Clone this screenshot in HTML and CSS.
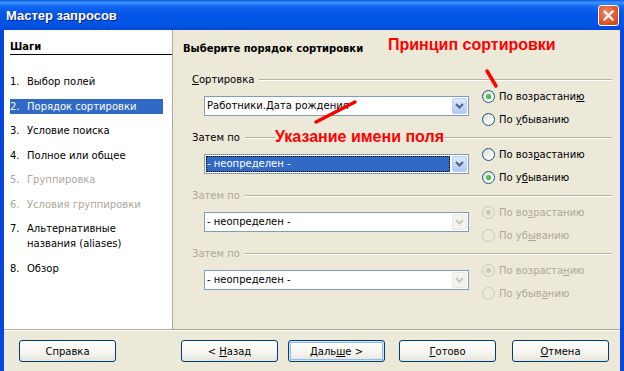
FILE: index.html
```html
<!DOCTYPE html>
<html>
<head>
  <title>Мастер запросов</title>
  <link rel="stylesheet" href="styles.css">
</head>
<body>
  <div class="window">
    <div class="titlebar">
      <span class="title">Мастер запросов</span>
      <span class="close">
        <svg width="11" height="11" viewBox="0 0 11 11"><path d="M1.5 1.5 L9.5 9.5 M9.5 1.5 L1.5 9.5" stroke="#fff" stroke-width="2.2" stroke-linecap="square"/></svg>
      </span>
    </div>

    <div class="frame">
      <div class="main">
        <div class="steps">
          <div class="steps-head">Шаги</div>
          <ol class="step-list">
            <li class="step"><span class="num">1.</span><span>Выбор полей</span></li>
            <li class="step active"><span class="num">2.</span><span>Порядок сортировки</span></li>
            <li class="step"><span class="num">3.</span><span>Условие поиска</span></li>
            <li class="step"><span class="num">4.</span><span>Полное или общее</span></li>
            <li class="step off"><span class="num">5.</span><span>Группировка</span></li>
            <li class="step off"><span class="num">6.</span><span>Условия группировки</span></li>
            <li class="step"><span class="num">7.</span><span>Альтернативные<br>названия (aliases)</span></li>
            <li class="step"><span class="num">8.</span><span>Обзор</span></li>
          </ol>
        </div>

        <div class="page">
          <div class="page-head">Выберите порядок сортировки</div>

          <div class="group">
            <div class="group-head"><span><u>С</u>ортировка</span><i class="rule"></i></div>
            <div class="group-row">
              <div class="combo">
                <span class="combo-text">Работники.Дата рождения</span>
                <span class="combo-btn"><svg width="9" height="6" viewBox="0 0 9 6"><path d="M1 1 L4.5 4.5 L8 1" fill="none" stroke="#4d6185" stroke-width="2"/></svg></span>
              </div>
              <div class="radios">
                <div class="radio"><span class="dot checked"></span><span>По возрастани<u>ю</u></span></div>
                <div class="radio"><span class="dot"></span><span>По <u>у</u>быванию</span></div>
              </div>
            </div>
          </div>

          <div class="group">
            <div class="group-head"><span>Затем по</span><i class="rule"></i></div>
            <div class="group-row">
              <div class="combo">
                <span class="combo-text"><span class="selected">- неопределен -</span></span>
                <span class="combo-btn"><svg width="9" height="6" viewBox="0 0 9 6"><path d="M1 1 L4.5 4.5 L8 1" fill="none" stroke="#4d6185" stroke-width="2"/></svg></span>
              </div>
              <div class="radios">
                <div class="radio"><span class="dot"></span><span>По воз<u>р</u>астанию</span></div>
                <div class="radio"><span class="dot checked"></span><span>По у<u>б</u>ыванию</span></div>
              </div>
            </div>
          </div>

          <div class="group disabled">
            <div class="group-head"><span>Затем по</span><i class="rule"></i></div>
            <div class="group-row">
              <div class="combo">
                <span class="combo-text">- неопределен -</span>
                <span class="combo-btn"><svg width="9" height="6" viewBox="0 0 9 6"><path d="M1 1 L4.5 4.5 L8 1" fill="none" stroke="#c9c7ba" stroke-width="2"/></svg></span>
              </div>
              <div class="radios">
                <div class="radio"><span class="dot checked"></span><span>По во<u>з</u>растанию</span></div>
                <div class="radio"><span class="dot"></span><span>По уб<u>ы</u>ванию</span></div>
              </div>
            </div>
          </div>

          <div class="group disabled">
            <div class="group-head"><span>Затем по</span><i class="rule"></i></div>
            <div class="group-row">
              <div class="combo">
                <span class="combo-text">- неопределен -</span>
                <span class="combo-btn"><svg width="9" height="6" viewBox="0 0 9 6"><path d="M1 1 L4.5 4.5 L8 1" fill="none" stroke="#c9c7ba" stroke-width="2"/></svg></span>
              </div>
              <div class="radios">
                <div class="radio"><span class="dot checked"></span><span>По возраста<u>н</u>ию</span></div>
                <div class="radio"><span class="dot"></span><span>По убыв<u>а</u>нию</span></div>
              </div>
            </div>
          </div>
        </div>
      </div>

      <div class="buttons">
        <button class="btn">Справка</button>
        <button class="btn back">&lt; <u>Н</u>азад</button>
        <button class="btn next default">Даль<u>ш</u>е &gt;</button>
        <button class="btn done"><u>Г</u>отово</button>
        <button class="btn cancel"><u>О</u>тмена</button>
      </div>
    </div>

    <!-- red hand-drawn notes on top of the dialog -->
    <div class="note note-order">Принцип сортировки</div>
    <div class="note note-field">Указание имени поля</div>
    <svg class="marks" width="624" height="371" viewBox="0 0 624 371">
      <path d="M487 71 L496 86" stroke="#ff0000" stroke-width="3.5" stroke-linecap="round"/>
      <path d="M316 122 L355 102" stroke="#ff0000" stroke-width="3.5" stroke-linecap="round"/>
    </svg>
  </div>
</body>
</html>
```

FILE: styles.css
```css
body {
  margin: 0;
  font-family: Tahoma, "DejaVu Sans", sans-serif;
  font-size: 10px;
  color: #000;
}
.window {
  position: relative;
  width: 624px;
  height: 371px;
  overflow: hidden;
  background: #ece9d8;
}
.titlebar {
  height: 30px;
  display: flex;
  align-items: center;
  justify-content: space-between;
  padding: 0 5px 0 6px;
  box-sizing: border-box;
  background: linear-gradient(to bottom, #0a5be4 0%, #3d95ff 9%, #1568f2 20%, #0356e7 45%, #0055e5 80%, #0348d8 100%);
}
.title {
  font-family: "Liberation Sans", Arial, sans-serif;
  font-weight: bold;
  font-size: 13px;
  color: #fff;
  text-shadow: 1px 1px #0a1e8a;
}
.close {
  width: 21px;
  height: 21px;
  box-sizing: border-box;
  border: 1px solid #fff;
  border-radius: 3px;
  background: radial-gradient(circle at 40% 35%, #f08a65 0%, #e05a2e 55%, #c2401b 100%);
  display: flex;
  align-items: center;
  justify-content: center;
  margin-top: 1px;
}
.frame {
  border-left: 4px solid #0846dc;
  border-right: 4px solid #0846dc;
  height: 341px;
}
.main {
  display: flex;
  height: 299px;
}
.steps {
  width: 168px;
  background: #fff;
  border-right: 1px solid #aca899;
  padding-top: 10px;
}
.steps-head {
  margin-left: 6px;
  line-height: 14px;
  font-weight: bold;
  border-bottom: 1px solid #000;
}
.step-list {
  list-style: none;
  margin: 0;
  padding: 19px 0 0 6px;
}
.step {
  display: flex;
  width: 153px;
  line-height: 15px;
  margin-bottom: 9.5px;
}
.step .num {
  width: 17px;
  flex-shrink: 0;
}
.step.active {
  background: #316ac5;
  color: #fff;
}
.step.off {
  color: #aca899;
}
.page {
  flex: 1;
  padding: 12px 8px 0 10px;
}
.page-head {
  font-weight: bold;
  line-height: 14px;
  margin-bottom: 17px;
}
.group {
  margin-bottom: 1px;
}
.group-head {
  display: flex;
  align-items: center;
  margin-left: 9px;
  line-height: 14px;
}
.rule {
  flex: 1;
  height: 0;
  margin-left: 5px;
  border-top: 1px solid #b6b3a5;
  border-bottom: 1px solid #fff;
}
.group-row {
  display: flex;
  margin: -3px 0 0 21px;
  height: 46px;
}
.combo {
  width: 265px;
  height: 20px;
  margin-top: 12px;
  box-sizing: border-box;
  border: 1px solid #7f9db9;
  background: #fff;
  display: flex;
  align-items: center;
  padding: 1px;
}
.combo-text {
  flex: 1;
  height: 16px;
  line-height: 16px;
  padding-left: 1px;
  margin-right: 2px;
  white-space: nowrap;
  display: flex;
}
.combo-text .selected {
  flex: 1;
  background: #316ac5;
  color: #fff;
  outline: 1px dotted #000;
  outline-offset: -1px;
  margin-left: -1px;
  padding-left: 1px;
}
.combo-btn {
  width: 15px;
  height: 16px;
  box-sizing: border-box;
  border: 1px solid #bacdfa;
  border-radius: 2px;
  background: linear-gradient(to bottom, #e0e9fe, #c2d4fb 60%, #b4c7f5);
  display: flex;
  align-items: center;
  justify-content: center;
}
.radios {
  margin: 1px 0 0 13px;
}
.radio {
  display: flex;
  align-items: center;
  line-height: 23px;
  height: 23px;
  white-space: nowrap;
}
.dot {
  width: 13px;
  height: 13px;
  box-sizing: border-box;
  border: 1px solid #1c5180;
  border-radius: 50%;
  background: linear-gradient(135deg, #dcd9cf, #fff 80%);
  margin-right: 4px;
  display: flex;
  align-items: center;
  justify-content: center;
}
.dot.checked::after {
  content: "";
  width: 5px;
  height: 5px;
  border-radius: 50%;
  background: radial-gradient(circle at 40% 40%, #55d655, #21a121);
}
.disabled .group-head,
.disabled .radio {
  color: #aca899;
}
.disabled .combo-btn {
  border-color: #e8e8e1;
  background: #f4f3ee;
}
.disabled .dot {
  border-color: #cac8bb;
  background: #ece9d8;
}
.disabled .dot.checked::after {
  background: #cac8bb;
}
.buttons {
  border-top: 1px solid #aca899;
  box-shadow: inset 0 1px 0 #fff;
  padding: 10px 0 0 15px;
  display: flex;
}
.btn {
  width: 97px;
  height: 22px;
  padding: 0;
  font: inherit;
  color: #000;
  border: 1px solid #003c74;
  border-radius: 3px;
  background: linear-gradient(to bottom, #fff 0%, #f6f5f0 55%, #e6e5dc 100%);
}
.btn.back {
  margin-left: 65px;
}
.btn.next {
  margin-left: 10px;
}
.btn.done {
  margin-left: 14px;
}
.btn.cancel {
  margin-left: 16px;
}
.btn.default {
  box-shadow: inset 0 0 0 1px #cee7ff, inset 0 0 0 2px #98b8ea;
}
.note {
  position: absolute;
  font-family: "Liberation Sans", Arial, sans-serif;
  font-weight: bold;
  font-size: 16px;
  line-height: 18px;
  color: #ff0000;
  background: #ece9d8;
}
.note-order {
  left: 388px;
  top: 36px;
}
.note-field {
  left: 275px;
  top: 128px;
}
.marks {
  position: absolute;
  left: 0;
  top: 0;
  pointer-events: none;
}
```
